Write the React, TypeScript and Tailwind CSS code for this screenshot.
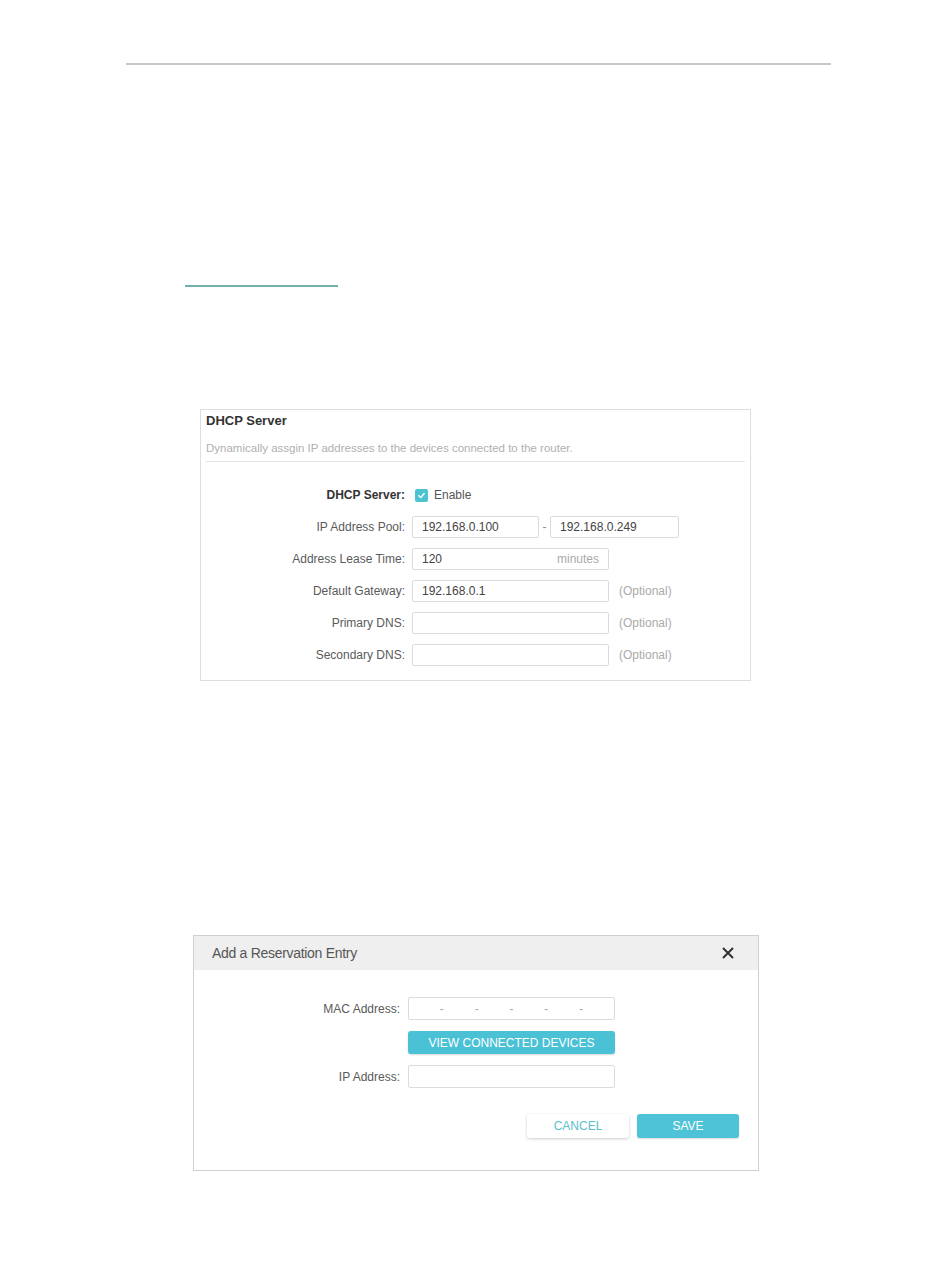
const font = { fontFamily: '"Liberation Sans", Arial, sans-serif' }

function Field({ children, className = "" }: { children?: React.ReactNode; className?: string }) {
  return (
    <div className={`h-[22px] border border-[#dcdcdc] rounded-[2px] bg-white flex items-center px-[9px] text-[12px] text-[#444] ${className}`}>
      {children}
    </div>
  )
}

function Row({ label, bold, children }: { label: string; bold?: boolean; children: React.ReactNode }) {
  return (
    <div className="flex items-center h-[22px]">
      <div className={`w-[204px] text-right text-[12px] ${bold ? "font-bold text-[#333]" : "text-[#5a5a5a]"}`}>{label}</div>
      <div className="ml-[7px] flex items-center">{children}</div>
    </div>
  )
}

function Optional() {
  return <span className="ml-[10px] text-[12px] text-[#aaa]">(Optional)</span>
}

export default function App() {
  return (
    <div style={font} className="w-[950px] h-[1263px] bg-white pt-[63px]">
      <div className="ml-[126px] w-[705px] h-[2px] bg-[#c8c8c8]" />

      <div className="mt-[220px] ml-[185px] w-[153px] h-[2px] bg-[#72b2ad]" />

      {/* DHCP server panel */}
      <div className="mt-[122px] ml-[200px] w-[551px] h-[272px] border border-[#dedede]">
        <div className="px-[5px]">
          <div className="pt-[2px] text-[13px] leading-[18px] font-bold text-[#333]">DHCP Server</div>
          <div className="mt-[9px] text-[11.5px] leading-[18px] text-[#b0b0b0] pb-[4px] border-b border-[#e4e4e4]">
            Dynamically assgin IP addresses to the devices connected to the router.
          </div>
        </div>
        <div className="mt-[22px] flex flex-col gap-[10px]">
          <Row label="DHCP Server:" bold>
            <span className="ml-[3px] w-[13px] h-[13px] rounded-[2px] bg-[#4cc3d1] flex items-center justify-center">
              <svg width="9" height="9" viewBox="0 0 10 10" fill="none">
                <path d="M2 5.2L4.2 7.3L8 2.8" stroke="white" strokeWidth="1.6" strokeLinecap="round" strokeLinejoin="round" />
              </svg>
            </span>
            <span className="ml-[6px] text-[12px] text-[#555]">Enable</span>
          </Row>
          <Row label="IP Address Pool:">
            <Field className="w-[127px]">192.168.0.100</Field>
            <span className="w-[11px] text-center text-[12px] text-[#888]">-</span>
            <Field className="w-[129px]">192.168.0.249</Field>
          </Row>
          <Row label="Address Lease Time:">
            <Field className="w-[197px] justify-between">
              <span>120</span>
              <span className="text-[#aaa]">minutes</span>
            </Field>
          </Row>
          <Row label="Default Gateway:">
            <Field className="w-[197px]">192.168.0.1</Field>
            <Optional />
          </Row>
          <Row label="Primary DNS:">
            <Field className="w-[197px]" />
            <Optional />
          </Row>
          <Row label="Secondary DNS:">
            <Field className="w-[197px]" />
            <Optional />
          </Row>
        </div>
      </div>

      {/* Reservation dialog */}
      <div className="mt-[254px] ml-[193px] w-[566px] h-[236px] border border-[#cfcfcf] bg-white">
        <div className="h-[34px] bg-[#efefef] flex items-center justify-between pl-[18px] pr-[24px]">
          <span className="text-[14px] text-[#555] tracking-[-0.3px]">Add a Reservation Entry</span>
          <svg width="12" height="12" viewBox="0 0 12 12">
            <path d="M1 1L11 11M11 1L1 11" stroke="#333" strokeWidth="2" />
          </svg>
        </div>
        <div className="pt-[27px] flex flex-col">
          <div className="flex items-center">
            <div className="w-[206px] text-right text-[12px] text-[#5a5a5a]">MAC Address:</div>
            <div className="ml-[8px] w-[207px] h-[23px] border border-[#dcdcdc] rounded-[2px] flex items-center text-[12px] text-[#aaa]">
              <span className="flex-1" />-<span className="flex-1" />-<span className="flex-1" />-<span className="flex-1" />-<span className="flex-1" />-<span className="flex-1" />
            </div>
          </div>
          <div className="mt-[11px] ml-[214px] w-[207px] h-[23px] rounded-[3px] bg-[#4bc1d6] text-white text-[12px] flex items-center justify-center shadow-[0_1px_2px_rgba(0,0,0,0.15)]">
            VIEW CONNECTED DEVICES
          </div>
          <div className="mt-[11px] flex items-center">
            <div className="w-[206px] text-right text-[12px] text-[#5a5a5a]">IP Address:</div>
            <div className="ml-[8px] w-[207px] h-[23px] border border-[#dcdcdc] rounded-[2px]" />
          </div>
          <div className="mt-[26px] flex justify-end pr-[19px] gap-[8px]">
            <div className="w-[102px] h-[24px] rounded-[3px] bg-white text-[#5bc0c9] text-[12px] flex items-center justify-center shadow-[0_1px_3px_rgba(0,0,0,0.2)]">
              CANCEL
            </div>
            <div className="w-[102px] h-[24px] rounded-[3px] bg-[#4ec2d6] text-white text-[12px] flex items-center justify-center shadow-[0_1px_2px_rgba(0,0,0,0.15)]">
              SAVE
            </div>
          </div>
        </div>
      </div>
    </div>
  )
}
